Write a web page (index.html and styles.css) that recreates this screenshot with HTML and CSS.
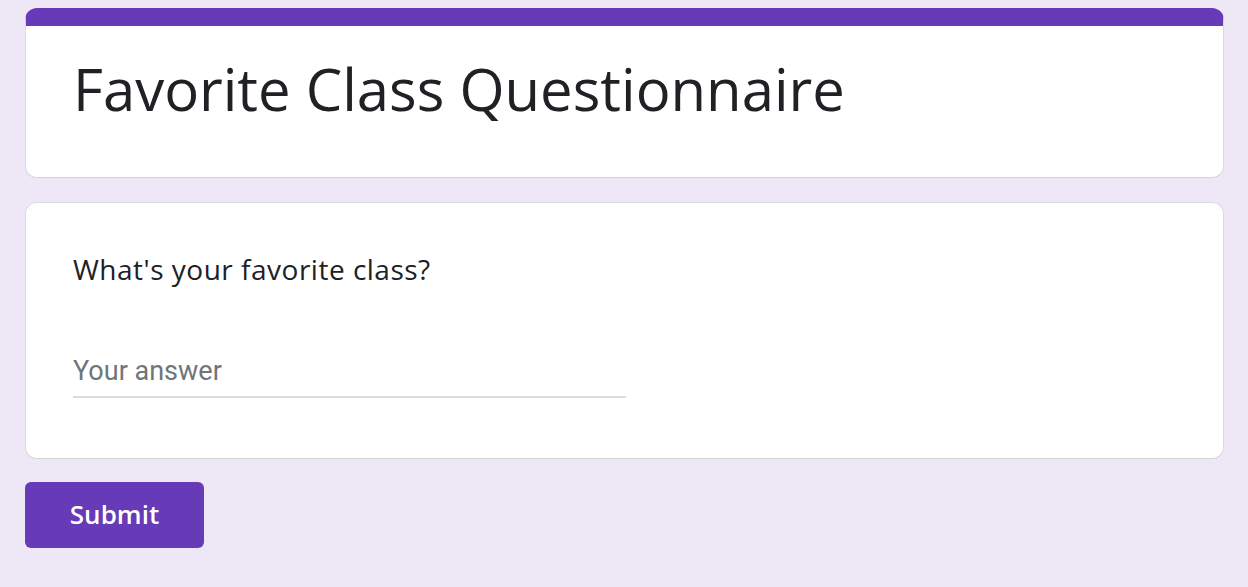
FILE: index.html
```html
<!DOCTYPE html>
<html>
<head>
  <meta charset="utf-8">
  <title>Favorite Class Questionnaire</title>
  <link rel="stylesheet" href="styles.css">
</head>

<body>
    <div class="form">
        <div class="card header-card">
            <h1>Favorite Class Questionnaire</h1>
        </div>
        <div class="card question-card">
            <p class="question">What's your favorite class?</p>
            <input type="text" class="answer" placeholder="Your answer">
        </div>
        <button class="submit">Submit</button>
    </div>
</body>
</html>
```

FILE: styles.css
```css
* {
    box-sizing: border-box;
}

body {
    margin: 0;
    background-color: #ede7f6;
    font-family: "Open Sans", sans-serif;
}

.form {
    padding: 8px 24px 0 25px;
    display: flex;
    flex-direction: column;
    align-items: flex-start;
    gap: 24px;
}

.card {
    align-self: stretch;
    background-color: #fff;
    border: 1px solid #dadce0;
    border-bottom-color: #d3d3d8;
    border-radius: 12px;
}

.header-card {
    border-top: 18px solid #673ab7;
    height: 170px;
    padding: 0 47px;
}

h1 {
    margin: 27px 0 0 0;
    font-size: 58px;
    font-weight: 400;
    color: #202124;
    line-height: 72px;
}

.question-card {
    height: 257px;
    padding: 0 47px;
}

.question {
    margin: 48px 0 0 0;
    font-size: 28px;
    letter-spacing: 0.5px;
    color: #202124;
    line-height: 36px;
}

.answer {
    display: block;
    margin-top: 68px;
    width: 553px;
    height: 43px;
    border: none;
    border-bottom: 2px solid #dadce0;
    padding: 0 0 9px 0;
    font-family: Roboto, sans-serif;
    font-size: 27px;
    line-height: 32px;
    outline: none;
}

.answer::placeholder {
    color: #70757a;
}

.submit {
    background: #673ab7;
    color: #fff;
    border: none;
    border-radius: 6px;
    width: 179px;
    height: 66px;
    margin-top: -1px;
    padding-bottom: 3px;
    font-family: "Open Sans", sans-serif;
    font-size: 26px;
    font-weight: 600;
    cursor: pointer;
}
```
